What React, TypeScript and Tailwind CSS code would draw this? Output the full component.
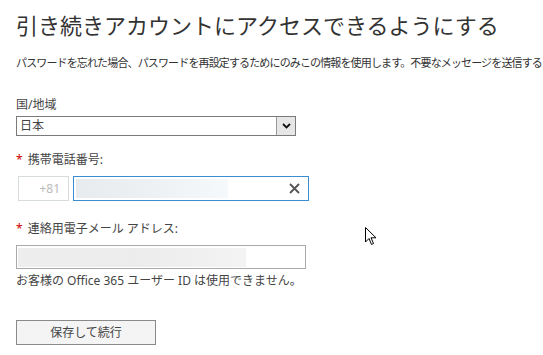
import React from "react";

export default function App() {
  return (
    <div className="relative w-[543px] h-[355px] overflow-hidden bg-white font-['Noto_Sans','Noto_Sans_CJK_JP',sans-serif] text-[#333]">
      <div className="pl-4 pt-[10px]">
        <h1 className="text-[22px] leading-[30px] font-normal text-[#333] whitespace-nowrap">
          引き続きアカウントにアクセスできるようにする
        </h1>
        <p className="mt-[15px] text-[11px] leading-[16px] tracking-[-0.86px] whitespace-nowrap text-[#333]">
          パスワードを忘れた場合、パスワードを再設定するためにのみこの情報を使用します。不要なメッセージを送信する
        </p>

        <div className="mt-[26px] text-[12px] leading-[16px] text-[#444]">国/地域</div>
        <div className="mt-[3px] flex h-[20px] w-[280px] border border-[#7a7a7a] bg-white">
          <div className="flex-1 pl-[3px] text-[12px] leading-[18px] text-[#444]">日本</div>
          <div className="flex w-[19px] items-center justify-center border-l border-[#9a9a9a] bg-[#e6e6e6]">
            <svg width="9" height="6" viewBox="0 0 9 6">
              <path d="M1 1 L4.5 4.5 L8 1" fill="none" stroke="#111" strokeWidth="1.8" />
            </svg>
          </div>
        </div>

        <div className="mt-[16px] flex items-center text-[12px] leading-[16px] text-[#444]">
          <span className="text-[#c00] mr-[5px]">*</span>
          <span>携帯電話番号:</span>
        </div>
        <div className="mt-[8px] flex gap-[4px] pl-[2px]">
          <div className="flex h-[25px] w-[51px] items-center justify-end border border-[#d6dbdb] pr-[8px] text-[12px] text-[#bbb]">
            +81
          </div>
          <div className="relative flex h-[25px] w-[236px] items-center border border-[#3a8dd0] bg-white">
            <div className="ml-[2px] h-[19px] w-[152px] bg-gradient-to-r from-[#e8ebee] via-[#eef1f4] to-[#f6f9fc]" />
            <svg className="absolute right-[8px] top-[6px]" width="11" height="11" viewBox="0 0 11 11">
              <path d="M1 1 L10 10 M10 1 L1 10" stroke="#555" strokeWidth="1.8" />
            </svg>
          </div>
        </div>

        <div className="mt-[20px] flex items-center text-[12px] leading-[16px] text-[#444]">
          <span className="text-[#c00] mr-[5px]">*</span>
          <span>連絡用電子メール アドレス:</span>
        </div>
        <div className="mt-[8px] flex h-[24px] w-[290px] items-center border border-[#aaa] bg-white">
          <div className="ml-[1px] h-[19px] w-[228px] bg-gradient-to-r from-[#eeeeee] via-[#ececec] to-[#f3f3f3]" />
        </div>
        <div className="mt-[4px] text-[12px] leading-[16px] text-[#444]">
          お客様の Office 365 ユーザー ID は使用できません。
        </div>

        <button className="mt-[31px] flex h-[25px] w-[140px] items-center justify-center border border-[#8a8a8a] bg-[#f4f4f4] text-[12px] text-[#444]">
          保存して続行
        </button>
      </div>

      <svg className="absolute left-[365px] top-[227px]" width="12" height="19" viewBox="0 0 12 19">
        <path d="M0.5 0.5 L0.5 15 L4 11.5 L6.5 17.5 L8.5 16.5 L6 10.8 L11 10.8 Z" fill="#fff" stroke="#000" strokeWidth="1" />
      </svg>
    </div>
  );
}
